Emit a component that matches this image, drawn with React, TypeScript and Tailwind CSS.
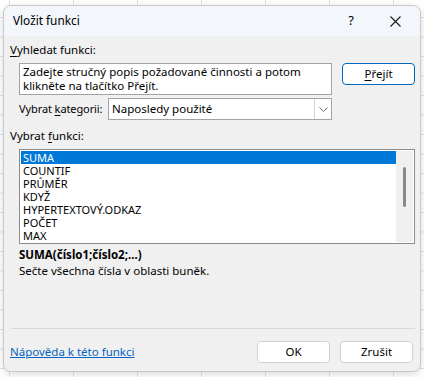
import { useState } from "react";

const functions = [
  "SUMA",
  "COUNTIF",
  "PRŮMĚR",
  "KDYŽ",
  "HYPERTEXTOVÝ.ODKAZ",
  "POČET",
  "MAX",
];

export default function App() {
  const [selected, setSelected] = useState(0);

  return (
    <div className="h-[377px] w-[424px] overflow-hidden bg-white bg-[linear-gradient(to_right,#e3e3e3_1px,transparent_1px),linear-gradient(to_bottom,#e3e3e3_1px,transparent_1px)] bg-[size:64px_19.5px] bg-[position:9px_17px] pt-[5px] pl-[3px] font-['Noto_Sans',sans-serif] text-[11.5px] text-black">
      <div className="flex h-[367px] w-[418px] flex-col overflow-hidden rounded-[8px] border border-[#c9c9c9] bg-[#f0f0f0] shadow-[0_2px_8px_rgba(0,0,0,0.15)]">
        {/* title bar */}
        <div className="flex h-[30px] shrink-0 items-center bg-[#f3f6fb] pl-[9px]">
          <span className="text-[11.8px]">Vložit funkci</span>
          <span className="ml-auto mr-[36px] text-[13px]">?</span>
          <svg width="11" height="11" viewBox="0 0 11 11" className="mr-[19px]">
            <path d="M0.5 0.5 L10.5 10.5 M10.5 0.5 L0.5 10.5" stroke="#1a1a1a" strokeWidth="1.1" />
          </svg>
        </div>

        <div className="flex flex-1 flex-col pl-[6px] pr-[5px]">
          <div className="mt-[5px] h-[17px] leading-[17px]">
            <span className="underline underline-offset-2">V</span>yhledat funkci:
          </div>

          <div className="mt-[5px] flex">
            <div className="ml-[9px] flex w-[313px] flex-col">
              <div className="h-[32px] border border-[#a3a3a3] bg-white px-[3px] pt-[1px] leading-[14px]">
                Zadejte stručný popis požadované činnosti a potom klikněte na tlačítko Přejít.
              </div>
              <div className="mt-[3px] flex h-[22px] items-center">
                <span className="w-[89px] whitespace-nowrap text-[11px] tracking-[-0.1px]">
                  Vybrat <span className="underline underline-offset-2">k</span>ategorii:
                </span>
                <div className="flex h-[22px] flex-1 items-center border border-[#a3a3a3] bg-white pl-[3px]">
                  <span>Naposledy použité</span>
                  <div className="ml-auto flex h-full w-[17px] items-center justify-center border-l border-[#d4d4d4]">
                    <svg width="9" height="5" viewBox="0 0 9 5">
                      <path d="M0.5 0.5 L4.5 4.5 L8.5 0.5" fill="none" stroke="#6b6b6b" strokeWidth="1" />
                    </svg>
                  </div>
                </div>
              </div>
            </div>
            <button className="ml-[10px] flex h-[22px] w-[73px] items-center justify-center rounded-[4px] border-[1.5px] border-[#0067c0] bg-white">
              <span className="underline underline-offset-2">P</span>řejít
            </button>
          </div>

          <div className="mt-[7px] h-[17px] leading-[17px]">
            Vybrat <span className="underline underline-offset-2">f</span>unkci:
          </div>

          <div className="mt-[5px] ml-[9px] flex h-[95px] w-[396px] border border-[#8c8c8c] bg-white p-px">
            <ul className="flex-1 text-[11px] leading-[13px]">
              {functions.map((f, i) => (
                <li
                  key={f}
                  onClick={() => setSelected(i)}
                  className={`h-[13px] overflow-hidden pl-[2px] ${
                    selected === i ? "bg-[#0078d7] text-white" : ""
                  }`}
                >
                  {f}
                </li>
              ))}
            </ul>
            <div className="flex w-[17px] justify-center bg-[#f0f0f0] pt-[16px]">
              <div className="h-[40px] w-[3px] rounded-full bg-[#8a8a8a]" />
            </div>
          </div>

          <div className="mt-[3px] ml-[9px] h-[16px] font-bold leading-[16px]">SUMA(číslo1;číslo2;...)</div>
          <div className="ml-[9px] h-[16px] leading-[16px]">Sečte všechna čísla v oblasti buněk.</div>

          <div className="mt-auto mb-[12px] ml-[1px] h-px bg-[#d9d9d9]" />

          <div className="mb-[8px] flex items-center">
            <a href="#" className="text-[#0563c1] underline underline-offset-1">
              Nápověda k této funkci
            </a>
            <button className="ml-auto flex h-[22px] w-[73px] items-center justify-center rounded-[4px] border border-[#d1d1d1] bg-white">
              OK
            </button>
            <button className="ml-[10px] mr-[2px] flex h-[22px] w-[73px] items-center justify-center rounded-[4px] border border-[#d1d1d1] bg-white">
              Zrušit
            </button>
          </div>
        </div>
      </div>
    </div>
  );
}
